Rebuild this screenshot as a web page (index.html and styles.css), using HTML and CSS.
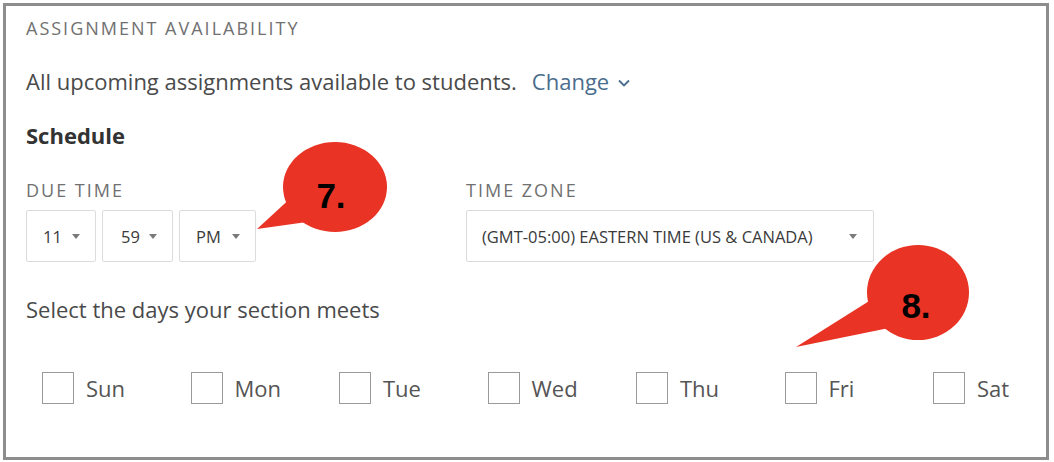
FILE: index.html
```html
<!DOCTYPE html>
<html>
<head>
<meta charset="utf-8">
<link rel="stylesheet" href="styles.css">
</head>
<body>
<div class="frame">
  <div class="panel">
    <div class="eyebrow">ASSIGNMENT AVAILABILITY</div>
    <div class="summary">
      <span>All upcoming assignments available to students.</span>
      <a class="change">Change
        <svg class="chev" width="14" height="10" viewBox="0 0 14 10"><path d="M2 2.5 L7 7.5 L12 2.5" fill="none" stroke="#4a6d8c" stroke-width="1.8"/></svg>
      </a>
    </div>
    <div class="heading">Schedule</div>
    <div class="fields">
      <div class="field">
        <div class="label">DUE TIME</div>
        <div class="selects">
          <div class="select s-hour"><span>11</span><i class="caret"></i></div>
          <div class="select s-min"><span>59</span><i class="caret"></i></div>
          <div class="select s-ampm"><span>PM</span><i class="caret"></i></div>
        </div>
      </div>
      <div class="field tz">
        <div class="label">TIME ZONE</div>
        <div class="select s-tz"><span>(GMT-05:00) EASTERN TIME (US &amp; CANADA)</span><i class="caret"></i></div>
      </div>
    </div>
    <div class="prompt">Select the days your section meets</div>
    <div class="days">
      <label class="day"><span class="box"></span>Sun</label>
      <label class="day"><span class="box"></span>Mon</label>
      <label class="day"><span class="box"></span>Tue</label>
      <label class="day"><span class="box"></span>Wed</label>
      <label class="day"><span class="box"></span>Thu</label>
      <label class="day"><span class="box"></span>Fri</label>
      <label class="day"><span class="box"></span>Sat</label>
    </div>
  </div>
  <svg class="callout callout-7" width="140" height="110" viewBox="0 0 140 110">
    <path d="M3 98 L40 64 L60 90 Z" fill="#e93325"/>
    <ellipse cx="81" cy="56" rx="52" ry="45" fill="#e93325"/>
    <text x="77" y="77" text-anchor="middle" class="callout-text">7.</text>
  </svg>
  <svg class="callout callout-8" width="180" height="110" viewBox="0 0 180 110">
    <path d="M2 104 L80 55 L95 85 Z" fill="#e93325"/>
    <ellipse cx="124" cy="49.5" rx="51" ry="47.5" fill="#e93325"/>
    <text x="122" y="75" text-anchor="middle" class="callout-text">8.</text>
  </svg>
</div>
</body>
</html>
```

FILE: styles.css
```css
html, body {
  margin: 0;
  padding: 0;
  background: #ffffff;
}
body {
  font-family: "Open Sans", "Liberation Sans", sans-serif;
  color: #444;
  width: 1054px;
  height: 462px;
  overflow: hidden;
}
.frame {
  position: relative;
  margin: 3px 0 0 3px;
  width: 1040px;
  height: 451px;
  border: 3px solid #8d8d8d;
  background: #fff;
  overflow: hidden;
}
.panel {
  padding: 10px 20px 0 20px;
}
.eyebrow {
  font-size: 18px;
  letter-spacing: 2px;
  color: #707070;
  line-height: 24px;
}
.summary {
  margin-top: 26px;
  font-size: 22px;
  line-height: 30px;
  color: #4a4a4a;
  display: flex;
  align-items: center;
}
.change {
  margin-left: 15px;
  color: #4a6d8c;
  display: flex;
  align-items: center;
}
.chev {
  margin-left: 8px;
  margin-top: 4px;
}
.heading {
  margin-top: 24px;
  font-size: 22px;
  font-weight: 700;
  line-height: 30px;
  color: #333;
}
.fields {
  margin-top: 28px;
  display: flex;
}
.field {
  width: 440px;
  flex: none;
}
.label {
  font-size: 18px;
  letter-spacing: 2px;
  color: #707070;
  line-height: 24px;
}
.selects {
  margin-top: 8px;
  display: flex;
  gap: 6px;
}
.select {
  height: 52px;
  box-sizing: border-box;
  border: 1px solid #dcdcdc;
  border-radius: 2px;
  display: flex;
  align-items: center;
  justify-content: space-between;
  font-size: 16.5px;
  color: #3a3a3a;
  padding: 0 15px 0 16px;
  background: #fff;
}
.s-hour { width: 70px; }
.s-min { width: 71px; padding-left: 18px; }
.s-ampm { width: 77px; padding-left: 16px; }
.tz .select { margin-top: 8px; }
.s-tz {
  width: 408px;
  padding-left: 15px;
  padding-right: 16px;
}
.caret {
  width: 0;
  height: 0;
  border-left: 4.5px solid transparent;
  border-right: 4.5px solid transparent;
  border-top: 5px solid #7a7a7a;
}
.prompt {
  margin-top: 32px;
  font-size: 22px;
  line-height: 30px;
  color: #4a4a4a;
}
.days {
  margin-top: 48px;
  padding-left: 16px;
  display: flex;
}
.day {
  width: 148.5px;
  flex: none;
  display: flex;
  align-items: center;
  font-size: 22px;
  color: #555;
  line-height: 32px;
}
.box {
  width: 30px;
  height: 30px;
  border: 1px solid #9a9a9a;
  margin-right: 12px;
  background: #fff;
}
.callout {
  position: absolute;
}
.callout-7 {
  left: 248px;
  top: 125px;
}
.callout-8 {
  left: 788px;
  top: 237px;
}
.callout-text {
  font-family: "Liberation Sans", Arial, sans-serif;
  font-weight: 700;
  font-size: 35px;
  fill: #000;
}
```
